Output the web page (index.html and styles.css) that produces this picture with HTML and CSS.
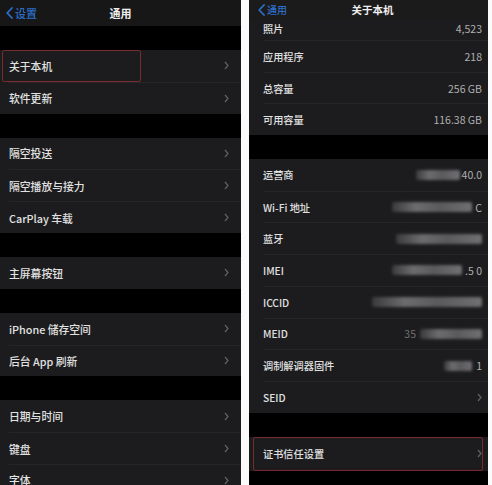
FILE: index.html
```html
<!DOCTYPE html>
<html lang="zh-CN">
<head>
<meta charset="utf-8">
<title>通用 / 关于本机</title>
<link rel="stylesheet" href="styles.css">
</head>
<body>
<div class="screen">
  <section class="panel left">
    <header class="nav nav-l">
      <span class="back"><svg width="7" height="12" viewBox="0 0 7 12"><polyline points="6,1 1.2,6 6,11" fill="none" stroke="currentColor" stroke-width="1.8" stroke-linecap="round" stroke-linejoin="round"/></svg>设置</span>
      <span class="title">通用</span>
      <span></span>
    </header>
    <div class="spacer"></div>
    <ul class="group">
      <li class="row"><div class="inner"><span>关于本机</span><svg class="chev" width="5" height="9" viewBox="0 0 5 9"><polyline points="1,1 4,4.5 1,8" fill="none" stroke="currentColor" stroke-width="1.2"/></svg></div><span class="mark mark-l"></span></li>
      <li class="row"><div class="inner"><span>软件更新</span><svg class="chev" width="5" height="9" viewBox="0 0 5 9"><polyline points="1,1 4,4.5 1,8" fill="none" stroke="currentColor" stroke-width="1.2"/></svg></div></li>
    </ul>
    <div class="spacer"></div>
    <ul class="group">
      <li class="row"><div class="inner"><span>隔空投送</span><svg class="chev" width="5" height="9" viewBox="0 0 5 9"><polyline points="1,1 4,4.5 1,8" fill="none" stroke="currentColor" stroke-width="1.2"/></svg></div></li>
      <li class="row"><div class="inner"><span>隔空播放与接力</span><svg class="chev" width="5" height="9" viewBox="0 0 5 9"><polyline points="1,1 4,4.5 1,8" fill="none" stroke="currentColor" stroke-width="1.2"/></svg></div></li>
      <li class="row"><div class="inner"><span>CarPlay 车载</span><svg class="chev" width="5" height="9" viewBox="0 0 5 9"><polyline points="1,1 4,4.5 1,8" fill="none" stroke="currentColor" stroke-width="1.2"/></svg></div></li>
    </ul>
    <div class="spacer"></div>
    <ul class="group">
      <li class="row"><div class="inner"><span>主屏幕按钮</span><svg class="chev" width="5" height="9" viewBox="0 0 5 9"><polyline points="1,1 4,4.5 1,8" fill="none" stroke="currentColor" stroke-width="1.2"/></svg></div></li>
    </ul>
    <div class="spacer"></div>
    <ul class="group">
      <li class="row"><div class="inner"><span>iPhone 储存空间</span><svg class="chev" width="5" height="9" viewBox="0 0 5 9"><polyline points="1,1 4,4.5 1,8" fill="none" stroke="currentColor" stroke-width="1.2"/></svg></div></li>
      <li class="row"><div class="inner"><span>后台 App 刷新</span><svg class="chev" width="5" height="9" viewBox="0 0 5 9"><polyline points="1,1 4,4.5 1,8" fill="none" stroke="currentColor" stroke-width="1.2"/></svg></div></li>
    </ul>
    <div class="spacer"></div>
    <ul class="group">
      <li class="row"><div class="inner"><span>日期与时间</span><svg class="chev" width="5" height="9" viewBox="0 0 5 9"><polyline points="1,1 4,4.5 1,8" fill="none" stroke="currentColor" stroke-width="1.2"/></svg></div></li>
      <li class="row"><div class="inner"><span>键盘</span><svg class="chev" width="5" height="9" viewBox="0 0 5 9"><polyline points="1,1 4,4.5 1,8" fill="none" stroke="currentColor" stroke-width="1.2"/></svg></div></li>
      <li class="row"><div class="inner"><span>字体</span><svg class="chev" width="5" height="9" viewBox="0 0 5 9"><polyline points="1,1 4,4.5 1,8" fill="none" stroke="currentColor" stroke-width="1.2"/></svg></div></li>
    </ul>
  </section>

  <section class="panel right">
    <header class="nav nav-r">
      <span class="back"><svg width="7" height="12" viewBox="0 0 7 12"><polyline points="6,1 1.2,6 6,11" fill="none" stroke="currentColor" stroke-width="1.8" stroke-linecap="round" stroke-linejoin="round"/></svg>通用</span>
      <span class="title">关于本机</span>
      <span></span>
    </header>
    <ul class="group">
      <li class="row-r partial"><div class="inner"><span>照片</span><span class="val">4,523</span></div></li>
      <li class="row-r"><div class="inner"><span>应用程序</span><span class="val">218</span></div></li>
      <li class="row-r"><div class="inner"><span>总容量</span><span class="val">256 GB</span></div></li>
      <li class="row-r"><div class="inner"><span>可用容量</span><span class="val">116.38 GB</span></div></li>
    </ul>
    <div class="spacer"></div>
    <ul class="group">
      <li class="row-r"><div class="inner"><span>运营商</span><span class="val"><i class="blur b-carrier"></i>40.0</span></div></li>
      <li class="row-r"><div class="inner"><span>Wi-Fi 地址</span><span class="val"><i class="blur b-wifi"></i>C</span></div></li>
      <li class="row-r"><div class="inner"><span>蓝牙</span><span class="val"><i class="blur b-bt"></i></span></div></li>
      <li class="row-r"><div class="inner"><span>IMEI</span><span class="val"><i class="blur b-imei"></i>.5 0</span></div></li>
      <li class="row-r"><div class="inner"><span>ICCID</span><span class="val"><i class="blur b-iccid"></i></span></div></li>
      <li class="row-r"><div class="inner"><span>MEID</span><span class="val"><span class="faint">35</span><i class="blur b-meid"></i></span></div></li>
      <li class="row-r"><div class="inner"><span>调制解调器固件</span><span class="val"><i class="blur b-modem"></i>1</span></div></li>
      <li class="row-r"><div class="inner"><span>SEID</span><svg class="chev" width="5" height="9" viewBox="0 0 5 9"><polyline points="1,1 4,4.5 1,8" fill="none" stroke="currentColor" stroke-width="1.2"/></svg></div></li>
    </ul>
    <div class="spacer"></div>
    <ul class="group">
      <li class="row-r cert"><div class="inner"><span>证书信任设置</span><svg class="chev" width="5" height="9" viewBox="0 0 5 9"><polyline points="1,1 4,4.5 1,8" fill="none" stroke="currentColor" stroke-width="1.2"/></svg></div><span class="mark mark-r"></span></li>
    </ul>
  </section>
</div>
</body>
</html>
```

FILE: styles.css
```css
* { box-sizing: border-box; margin: 0; padding: 0; }
html, body { background: #fbfbfb; }
body {
  width: 492px;
  height: 485px;
  overflow: hidden;
  font-family: "Noto Sans CJK SC", "Noto Sans", sans-serif;
}
.screen {
  display: flex;
  gap: 8px;
  height: 485px;
}
.panel {
  background: #000;
  height: 485px;
  overflow: hidden;
}
.left { width: 241px; }
.right { width: 239px; }

.nav {
  display: grid;
  grid-template-columns: 1fr auto 1fr;
  align-items: center;
  background: #171717;
}
.nav-l { height: 26px; }
.nav-r { height: 20px; background: #1b1b1b; }
.back {
  display: flex;
  align-items: center;
  gap: 2px;
  color: #2d6fca;
  font-size: 11px;
  font-weight: 500;
  padding-left: 6px;
  line-height: 1;
}
.nav-r .back { padding-left: 9px; font-size: 10px; }
.title {
  color: #eeeeee;
  font-size: 11px;
  font-weight: 700;
  line-height: 1;
}
.nav-r .title { font-size: 10.5px; padding-left: 8px; }

.spacer { height: 24px; }
.group { list-style: none; background: #1c1c1e; }

.row {
  position: relative;
  height: 31.8px;
  display: flex;
  padding-left: 9px;
  color: #e2e2e2;
  font-size: 10.8px;
  font-weight: 500;
}
.row-r {
  position: relative;
  height: 31.7px;
  display: flex;
  padding-left: 14px;
  color: #e0e0e0;
  font-size: 10.2px;
  font-weight: 500;
}
.inner {
  flex: 1;
  display: flex;
  align-items: center;
  justify-content: space-between;
  padding-right: 12px;
  border-top: 1px solid #262628;
}
.row-r .inner { padding-right: 6px; }
.row:first-child .inner,
.row-r:first-child .inner { border-top: none; }

.partial { height: 20px; }
.partial .inner { align-items: flex-start; padding-top: 1px; }
.cert { height: 34px; }

.chev { color: #626264; display: block; }
.val {
  display: flex;
  align-items: center;
  color: #b0b0b0;
  font-size: 10.5px;
  font-weight: 400;
}
.faint { color: #707070; margin-right: 4px; }

.blur {
  display: block;
  height: 10px;
  background: linear-gradient(90deg, #3a3a3c, #6c6c6e 30%, #5a5a5c 60%, #707072);
  filter: blur(1.6px);
  border-radius: 2px;
}
.b-carrier { width: 44px; margin-right: 2px; }
.b-wifi { width: 80px; margin-right: 3px; }
.b-bt { width: 86px; }
.b-imei { width: 70px; margin-right: 3px; }
.b-iccid { width: 110px; }
.b-meid { width: 62px; }
.b-modem { width: 28px; margin-right: 4px; }

.mark {
  position: absolute;
  top: 0;
  bottom: 0;
  border: 1.5px solid #7a2b2d;
  border-radius: 2px;
}
.mark-l { left: 2px; width: 139px; }
.mark-r { left: 4px; width: 230px; }
```
